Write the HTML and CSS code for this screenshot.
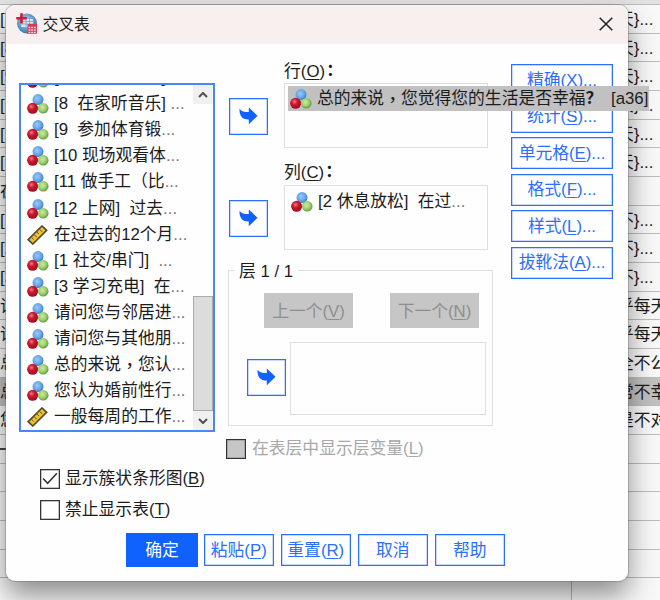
FILE: index.html
```html
<!DOCTYPE html>
<html lang="zh-CN">
<head>
<meta charset="utf-8">
<title>交叉表</title>
<link rel="stylesheet" href="styles.css">
</head>
<body>
<svg width="0" height="0" class="defs">
  <defs>
    <radialGradient id="gb" cx=".42" cy=".4" r=".6"><stop offset="0" stop-color="#9bcaf7"/><stop offset=".65" stop-color="#65a4e6"/><stop offset="1" stop-color="#3f7dc6"/></radialGradient>
    <radialGradient id="gr" cx=".4" cy=".35" r=".65"><stop offset="0" stop-color="#ee7c85"/><stop offset=".4" stop-color="#cf1930"/><stop offset="1" stop-color="#9c0a20"/></radialGradient>
    <radialGradient id="gg" cx=".42" cy=".4" r=".6"><stop offset="0" stop-color="#cdeaa5"/><stop offset=".6" stop-color="#9bcf6b"/><stop offset="1" stop-color="#62983c"/></radialGradient>
    <radialGradient id="globe" cx=".45" cy=".4" r=".6"><stop offset="0" stop-color="#c4dcf0"/><stop offset=".6" stop-color="#6c9fcc"/><stop offset="1" stop-color="#3c74ab"/></radialGradient>
    <symbol id="nominal" viewBox="0 0 22 20">
      <circle cx="11" cy="5.6" r="5.5" fill="url(#gb)"/>
      <circle cx="5.6" cy="14.3" r="5.5" fill="url(#gr)"/>
      <circle cx="16.2" cy="14.3" r="5.3" fill="url(#gg)"/>
    </symbol>
    <symbol id="scale" viewBox="0 0 22 20">
      <path d="M1.2 14.6 15 1l4.600 4.300L5.800 19z" fill="#f0c030" stroke="#54502f" stroke-width="1.700"/>
      <path d="M4.500 12.400l2 1.900M7.200 9.700l2.600 2.600M9.900 7l2 1.900M12.600 4.300l2.600 2.600" stroke="#665414" stroke-width="1"/>
    </symbol>
    <symbol id="move" viewBox="0 0 19 18">
      <path d="M.5 1.800C3 5.200 5.600 5.200 9.800 4.900V.4l8.700 8.400-8.700 8.500v-4.700C4 12.900.1 9.600.5 1.800z" fill="#0f62fe"/>
    </symbol>
    <symbol id="up" viewBox="0 0 10 6"><path d="M1 5l4-4 4 4" fill="none" stroke="#505050" stroke-width="2"/></symbol>
  </defs>
</svg>

<div class="sheet">
  <div class="row head"></div>
  <div class="row"><span>[7</span><span>天}...</span></div>
  <div class="row"><span>[8</span><span>天}...</span></div>
  <div class="row"><span>[9</span><span>天}...</span></div>
  <div class="row"><span>[1</span><span>天}...</span></div>
  <div class="row"><span>[1</span><span>天}...</span></div>
  <div class="row"><span>[1</span><span>天}...</span></div>
  <div class="row"><span>在</span><span></span></div>
  <div class="row"><span>[1</span><span>不}...</span></div>
  <div class="row"><span>[2</span><span>不}...</span></div>
  <div class="row"><span>[3</span><span>不}...</span></div>
  <div class="row"><span>请</span><span>乎每天</span></div>
  <div class="row"><span>请</span><span>乎每天</span></div>
  <div class="row"><span>总</span><span>全不公</span></div>
  <div class="row picked"><span>总</span><span>常不幸</span></div>
  <div class="row"><span>您</span><span>是不对</span></div>
  <div class="row last"><span class="rule"></span><span></span></div>
  <div class="row"><span></span><span></span></div>
  <div class="row"><span></span><span></span></div>
  <div class="row"><span></span><span></span></div>
  <div class="row"><span></span><span></span></div>
  <div class="row"><span></span><span></span></div>
</div>

<div class="dialog">
  <header class="title">
    <svg class="logo" viewBox="0 0 21 21">
      <circle cx="11" cy="10.500" r="10" fill="url(#globe)"/>
      <path d="M7 6h10v8H5z" fill="#e9f2fa" opacity=".85"/>
      <path d="M6 8.500h12M6 11h12M10 5v9M13.500 5v9" stroke="#6f9fca" stroke-width=".8"/>
      <path d="M.2 5.300h10.600M5.500.2v10.300" stroke="#cf1a3c" stroke-width="2.600"/>
      <path d="M11.500 11H21v9.800h-9.500z" fill="#d63a58"/>
      <path d="M12.500 14.500h7.500M12.500 17h7.500M12.500 19.300h7.500" stroke="#f7d3da" stroke-width="1.300" stroke-dasharray="1.900 .8"/>
    </svg>
    <span>交叉表</span>
    <svg class="close" viewBox="0 0 14 14"><path d="M.7.7l12.600 12.600M13.300.7.7 13.300" stroke="#222" stroke-width="1.500"/></svg>
  </header>

  <div class="main">
    <div class="list">
      <ul>
        <li><svg><use href="#nominal"/></svg>[7  看书看报纸] <i>...</i></li>
        <li><svg><use href="#nominal"/></svg>[8  在家听音乐] <i>...</i></li>
        <li><svg><use href="#nominal"/></svg>[9  参加体育锻<i>...</i></li>
        <li><svg><use href="#nominal"/></svg>[10 现场观看体<i>...</i></li>
        <li><svg><use href="#nominal"/></svg>[11 做手工（比<i>...</i></li>
        <li><svg><use href="#nominal"/></svg>[12 上网]  过去<i>...</i></li>
        <li><svg><use href="#scale"/></svg>在过去的12个月<i>...</i></li>
        <li><svg><use href="#nominal"/></svg>[1 社交/串门]  <i>...</i></li>
        <li><svg><use href="#nominal"/></svg>[3 学习充电]  在<i>...</i></li>
        <li><svg><use href="#nominal"/></svg>请问您与邻居进<i>...</i></li>
        <li><svg><use href="#nominal"/></svg>请问您与其他朋<i>...</i></li>
        <li><svg><use href="#nominal"/></svg>总的来说<b>，</b>您认<i>...</i></li>
        <li><svg><use href="#nominal"/></svg>您认为婚前性行<i>...</i></li>
        <li><svg><use href="#scale"/></svg>一般每周的工作<i>...</i></li>
      </ul>
      <div class="scrollbar">
        <div class="step"><svg><use href="#up"/></svg></div>
        <div class="thumb"></div>
        <div class="step down"><svg><use href="#up"/></svg></div>
      </div>
    </div>

    <div class="targets">
      <div class="label">行(<u>O</u>)<b class="colon">：</b></div>
      <div class="pair">
        <button class="move"><svg><use href="#move"/></svg></button>
        <div class="field"></div>
      </div>
      <div class="label second">列(<u>C</u>)<b class="colon">：</b></div>
      <div class="pair">
        <button class="move"><svg><use href="#move"/></svg></button>
        <div class="field"><div class="var"><svg><use href="#nominal"/></svg>[2 休息放松]  在过<i>...</i></div></div>
      </div>
      <section class="layer">
        <div class="legend"><span>层 1 / 1</span></div>
        <div class="nav">
          <button class="off">上一个(<u>V</u>)</button>
          <button class="off">下一个(<u>N</u>)</button>
        </div>
        <div class="drop">
          <button class="move"><svg><use href="#move"/></svg></button>
          <div class="slot"></div>
        </div>
      </section>
      <label class="check dim"><span class="box"></span>在表层中显示层变量(<u>L</u>)</label>
    </div>

    <div class="options">
      <button>精确(<u>X</u>)...</button>
      <button>统计(<u>S</u>)...</button>
      <button>单元格(<u>E</u>)...</button>
      <button>格式(<u>F</u>)...</button>
      <button>样式(<u>L</u>)...</button>
      <button>拔靴法(<u>A</u>)...</button>
    </div>
  </div>

  <div class="checks">
    <label class="check"><span class="box"><svg viewBox="0 0 16 16"><path d="M1.500 8l4.300 4.500L14.500 3" fill="none" stroke="#333" stroke-width="1.500"/></svg></span>显示簇状条形图(<u>B</u>)</label>
    <label class="check"><span class="box"></span>禁止显示表(<u>T</u>)</label>
  </div>

  <footer class="actions">
    <button class="primary">确定</button>
    <button>粘贴(<u>P</u>)</button>
    <button>重置(<u>R</u>)</button>
    <button>取消</button>
    <button>帮助</button>
  </footer>
</div>

<div class="drag"><svg><use href="#nominal"/></svg>总的来说<b>，</b>您觉得您的生活是否幸福<b class="query">？</b> [a36]</div>
</body>
</html>
```

FILE: styles.css
```css
* { box-sizing: border-box; }

body {
  margin: 0;
  width: 660px;
  height: 600px;
  overflow: hidden;
  position: relative;
  font: 16.8px/24px "Liberation Sans", "Noto Sans CJK SC", sans-serif;
  color: #1c1c1c;
  background: #f6f6f6;
}

.defs { position: absolute; }
svg { display: block; flex: none; }
i { font-style: normal; color: #777; }
/* full-width punctuation centred in its cell */
b { font-family: "Noto Sans CJK TC", sans-serif; font-weight: 500; line-height: 20px; }
.colon { margin-left: -3px; font-weight: 700; }
.query { font-family: "Noto Sans CJK SC", sans-serif; font-weight: 700; line-height: 24px; margin-top: -3px; }
u { text-underline-offset: 2px; text-decoration-thickness: 1px; }

/* data sheet behind the dialog */
.sheet { display: flex; flex-direction: column; }
.row {
  display: grid;
  grid-template-columns: 571px 1fr;
  flex: none;
  height: 28.68px;
  line-height: 29px;
  border-bottom: 1px solid #bcbcbc;
  overflow: hidden;
  white-space: nowrap;
  background: #f8f8f8;
}
.row.head { height: 5px; background: #e2e2e2; }
.row span:last-child { border-left: 1px solid #b8b8b8; padding-left: 45px; }
.row.picked { background: #c0c0c0; }
.row .rule { height: 15px; border-bottom: 2px solid #444; }

/* dialog window */
.dialog {
  position: absolute;
  left: 6px;
  top: 5px;
  width: 621.5px;
  height: 575.5px;
  display: flex;
  flex-direction: column;
  background: #fefefe;
  border-radius: 9px;
  overflow: hidden;
  box-shadow: 0 0 0 1px rgba(110, 110, 110, .4), 0 14px 28px rgba(0, 0, 0, .44);
}
.title {
  display: flex;
  align-items: center;
  flex: none;
  height: 39px;
  padding: 0 15px 0 10px;
  font-size: 15.8px;
  background: #f8f0ee;
}
.title span { margin-left: 5.5px; }
.logo { width: 21px; height: 21px; margin-top: -2px; }
.close { width: 14px; height: 14px; margin: -2px 0 0 auto; }

.main { display: flex; flex: none; height: 416px; padding-left: 13px; }

button {
  display: flex;
  align-items: center;
  justify-content: center;
  flex: none;
  margin: 0;
  padding: 1px 0 0;
  font: inherit;
  color: #2b6ffb;
  background: #fefefe;
  border: 1px solid #2b6ffb;
  box-shadow: inset 0 0 0 .5px #8fb3fc;
  white-space: pre;
}

.list {
  display: flex;
  width: 196px;
  height: 349px;
  margin-top: 39px;
  border: 2px solid #4b86f8;
  overflow: hidden;
}
.list ul { flex: 1; min-width: 0; margin: -20px 0 0; padding: 0; list-style: none; }
.list li {
  display: flex;
  align-items: center;
  height: 26.1px;
  padding-left: 6px;
  white-space: pre;
}
.list li svg, .var svg, .drag svg { width: 22px; height: 20px; margin-right: 5px; }
.scrollbar { display: flex; flex-direction: column; flex: none; width: 20px; background: #fefefe; }
.step { display: flex; align-items: center; justify-content: center; height: 19px; background: #f0f0f0; }
.step svg { width: 10px; height: 6px; }
.step.down svg { transform: rotate(180deg); }
.thumb { height: 115px; margin-top: auto; background: #dcdcdc; border: 1px solid #aaa; }

.targets { flex: none; width: 278px; margin-left: 11px; padding-top: 16px; }
.label { display: flex; height: 23px; padding-left: 58px; white-space: pre; }
.label.second { height: 24px; margin-top: 13px; }
.pair { display: flex; align-items: center; gap: 16px; padding-left: 3px; }
.pair .move { margin-top: 1px; }
.move { width: 39px; height: 37px; padding: 0; }
.move svg { width: 19px; height: 18px; }
.field { width: 204px; height: 65px; border: 1px solid #dedede; }
.var { display: flex; align-items: center; height: 31px; padding: 1px 0 0 6px; white-space: pre; }

.layer {
  width: 265px;
  height: 156px;
  margin: 20px 0 0 2px;
  border: 1px solid #dedede;
}
.legend { height: 23px; margin-top: -11px; padding-left: 6px; }
.legend span { display: inline-block; padding: 0 5px 0 4px; background: #fefefe; }
.nav { display: flex; gap: 37px; padding-left: 35px; margin-top: 10px; }
.nav .off { width: 89px; height: 35px; padding-top: 2px; color: #8e8e8e; background: #c6c6c6; border: 0; box-shadow: none; }
.drop { display: flex; align-items: center; gap: 4px; margin-top: 14px; padding-left: 18px; }
.drop .move { margin-top: -3px; }
.slot { width: 196px; height: 73px; border: 1px solid #dedede; }

.check { display: flex; align-items: center; height: 20px; white-space: pre; }
.box { flex: none; width: 20px; height: 20px; margin-right: 5px; border: 1px solid #333; box-shadow: inset 0 0 0 .5px #888; background: #fefefe; }
.box svg { width: 18px; height: 17px; }
.check.dim { margin-top: 13px; color: #a8a8a8; }
.dim .box { margin-right: 6px; background: #c6c6c6; }

.options { display: flex; flex-direction: column; gap: 4.5px; margin-left: 7px; padding-top: 20px; }
.options button { width: 102px; height: 32px; }

.checks { display: flex; flex-direction: column; gap: 11px; margin-top: 8.5px; padding-left: 34px; }
.actions { display: flex; align-items: center; gap: 7.5px; margin-top: 13.5px; padding-left: 120px; }
.actions button { width: 69.5px; height: 32px; padding-top: 2px; }
.actions .primary { width: 72px; height: 34px; margin-right: -1.5px; color: #fff; background: #0f62fe; border: 0; box-shadow: none; }

/* variable being dragged over the row field */
.drag {
  position: absolute;
  left: 288px;
  top: 86px;
  width: 361px;
  height: 25px;
  display: flex;
  align-items: center;
  padding-left: 2px;
  white-space: pre;
  word-spacing: 4px;
  background: #c1c1c1;
}
```
